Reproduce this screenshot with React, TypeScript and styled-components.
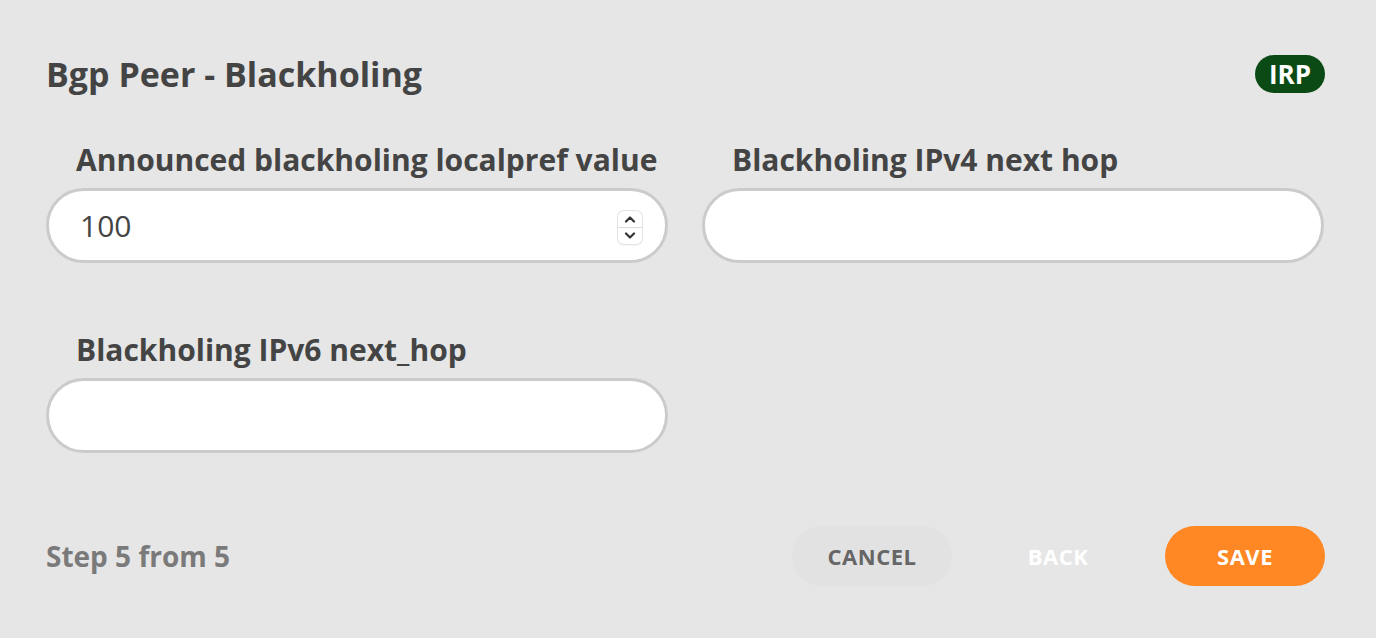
import React from "react";
import styled, { createGlobalStyle } from "styled-components";

const Global = createGlobalStyle`
  html, body { margin: 0; padding: 0; background: #e6e6e6; }
  body { font-family: "Open Sans", "Liberation Sans", sans-serif; color: #444; }
  * { box-sizing: border-box; }
`;

const Page = styled.div`
  width: 1376px;
  height: 638px;
  padding: 50px 51px 0 46px;
  display: flex;
  flex-direction: column;
`;

const Header = styled.div`
  display: flex;
  align-items: center;
  justify-content: space-between;
  height: 48px;
`;

const Title = styled.h1`
  margin: 0;
  font-size: 34px;
  font-weight: 700;
  color: #444;
  letter-spacing: 0;
`;

const Badge = styled.span`
  display: inline-flex;
  align-items: center;
  justify-content: center;
  width: 70px;
  height: 38px;
  border-radius: 19px;
  background: #0b4a14;
  color: #fff;
  font-size: 26px;
  font-weight: 700;
`;

const Grid = styled.div`
  display: grid;
  grid-template-columns: 622px 622px;
  column-gap: 34px;
  row-gap: 67px;
  margin-top: 42px;
`;

const Field = styled.div`
  display: flex;
  flex-direction: column;
`;

const Label = styled.label`
  font-size: 30px;
  font-weight: 700;
  color: #444;
  padding-left: 30px;
  line-height: 40px;
  margin-bottom: 8px;
  white-space: nowrap;
`;

const InputWrap = styled.div`
  position: relative;
  height: 75px;
`;

const Input = styled.input`
  width: 100%;
  height: 100%;
  border: 3px solid #cbcbcb;
  border-radius: 38px;
  background: #fff;
  padding: 0 31px;
  font-family: "Open Sans", "Liberation Sans", sans-serif;
  font-size: 30px;
  color: #444;
  outline: none;
`;

const Stepper = styled.div`
  position: absolute;
  right: 26px;
  top: 23px;
  width: 24px;
  height: 33px;
  border-radius: 6px;
  background: #fff;
  box-shadow: 0 0 0 1px #e4e4e4, 0 1px 2px rgba(0,0,0,0.12);
  display: flex;
  flex-direction: column;
  overflow: hidden;
`;

const StepHalf = styled.div<{ $top?: boolean }>`
  flex: 1;
  display: flex;
  align-items: center;
  justify-content: center;
  border-bottom: ${(p) => (p.$top ? "1px solid #dcdcdc" : "none")};
`;

const Footer = styled.div`
  display: flex;
  align-items: center;
  margin-top: 73px;
  height: 60px;
`;

const StepText = styled.div`
  font-size: 28px;
  font-weight: 700;
  color: #7a7a7a;
  flex: 1;
`;

const Button = styled.button<{ $variant: "cancel" | "back" | "save" }>`
  height: 60px;
  width: 160px;
  border: none;
  border-radius: 30px;
  font-family: "Open Sans", "Liberation Sans", sans-serif;
  font-weight: 700;
  font-size: 22px;
  letter-spacing: 0.5px;
  background: ${(p) =>
    p.$variant === "save" ? "#ff8824" : p.$variant === "cancel" ? "#e2e2e2" : "transparent"};
  color: ${(p) => (p.$variant === "cancel" ? "#666" : "#fff")};
  margin-left: ${(p) => (p.$variant === "cancel" ? "0" : p.$variant === "back" ? "26px" : "27px")};
  padding: 0;
`;

const Chevron = ({ up }: { up?: boolean }) => (
  <svg width="12" height="8" viewBox="0 0 12 8">
    <path
      d={up ? "M2 6.5 L6 2.5 L10 6.5" : "M2 1.5 L6 5.5 L10 1.5"}
      fill="none"
      stroke="#333"
      strokeWidth="2.2"
      strokeLinecap="round"
      strokeLinejoin="round"
    />
  </svg>
);

export default function App() {
  return (
    <>
      <Global />
      <Page>
        <Header>
          <Title>Bgp Peer - Blackholing</Title>
          <Badge>IRP</Badge>
        </Header>
        <Grid>
          <Field>
            <Label>Announced blackholing localpref value</Label>
            <InputWrap>
              <Input defaultValue="100" />
              <Stepper>
                <StepHalf $top>
                  <Chevron up />
                </StepHalf>
                <StepHalf>
                  <Chevron />
                </StepHalf>
              </Stepper>
            </InputWrap>
          </Field>
          <Field>
            <Label>Blackholing IPv4 next hop</Label>
            <InputWrap>
              <Input />
            </InputWrap>
          </Field>
          <Field>
            <Label>Blackholing IPv6 next_hop</Label>
            <InputWrap>
              <Input />
            </InputWrap>
          </Field>
        </Grid>
        <Footer>
          <StepText>Step 5 from 5</StepText>
          <Button $variant="cancel">CANCEL</Button>
          <Button $variant="back">BACK</Button>
          <Button $variant="save">SAVE</Button>
        </Footer>
      </Page>
    </>
  );
}
